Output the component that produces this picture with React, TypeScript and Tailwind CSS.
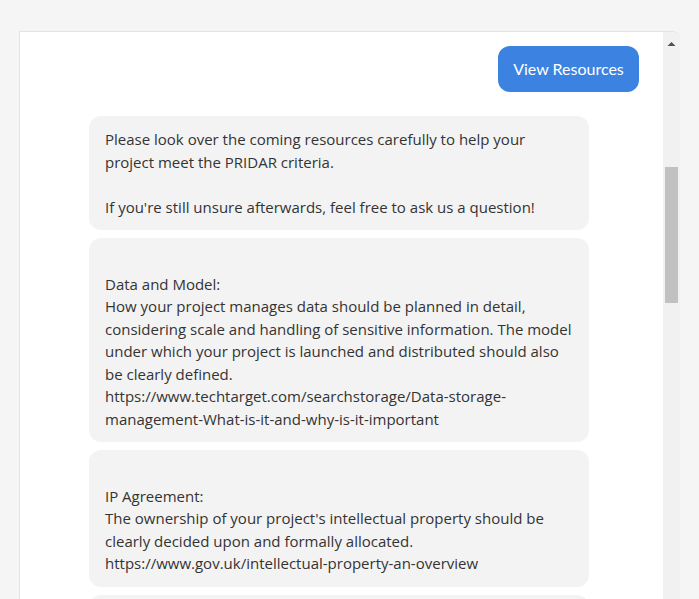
import React from "react";

const bubbles: string[][] = [
  [
    "Please look over the coming resources carefully to help your",
    "project meet the PRIDAR criteria.",
    "",
    "If you're still unsure afterwards, feel free to ask us a question!",
  ],
  [
    "",
    "Data and Model:",
    "How your project manages data should be planned in detail,",
    "considering scale and handling of sensitive information. The model",
    "under which your project is launched and distributed should also",
    "be clearly defined.",
    "https://www.techtarget.com/searchstorage/Data-storage-",
    "management-What-is-it-and-why-is-it-important",
  ],
  [
    "",
    "IP Agreement:",
    "The ownership of your project's intellectual property should be",
    "clearly decided upon and formally allocated.",
    "https://www.gov.uk/intellectual-property-an-overview",
  ],
  ["", ""],
];

export default function App() {
  return (
    <div className="w-[699px] h-[599px] overflow-hidden bg-[#f5f5f5] pt-[31px] pl-[19px] pr-[19px]">
      <div className="flex h-[620px] border-l border-t border-[#e3e3e3] rounded-tr-[8px] bg-white overflow-hidden">
        <div className="flex-1 flex flex-col pt-[14px]">
          <div className="flex justify-end pr-[24px]">
            <button className="w-[141px] h-[46px] rounded-[12px] bg-[#3c82e0] text-white text-[16px] font-['Lato',sans-serif] flex items-center justify-center">
              View Resources
            </button>
          </div>
          <div className="flex flex-col gap-[8px] mt-[24px] ml-[69px]">
            {bubbles.map((lines, i) => (
              <div
                key={i}
                className="w-[500px] rounded-[12px] bg-[#f3f3f3] px-[16px] py-[12px] text-[15px] leading-[22.5px] text-[#333333] font-['Open_Sans',sans-serif]"
              >
                {lines.map((l, j) => (
                  <div key={j} className="whitespace-nowrap h-[22.5px]">
                    {l}
                  </div>
                ))}
              </div>
            ))}
          </div>
        </div>
        <div className="w-[17px] bg-[#f1f1f1] flex flex-col items-center">
          <svg width="9" height="6" viewBox="0 0 9 6" className="mt-[9px]">
            <polygon points="0.5,5 4.5,1 8.5,5" fill="#505050" />
          </svg>
          <div className="mt-[120px] w-[13px] h-[136px] bg-[#c1c1c1]" />
        </div>
      </div>
    </div>
  );
}
